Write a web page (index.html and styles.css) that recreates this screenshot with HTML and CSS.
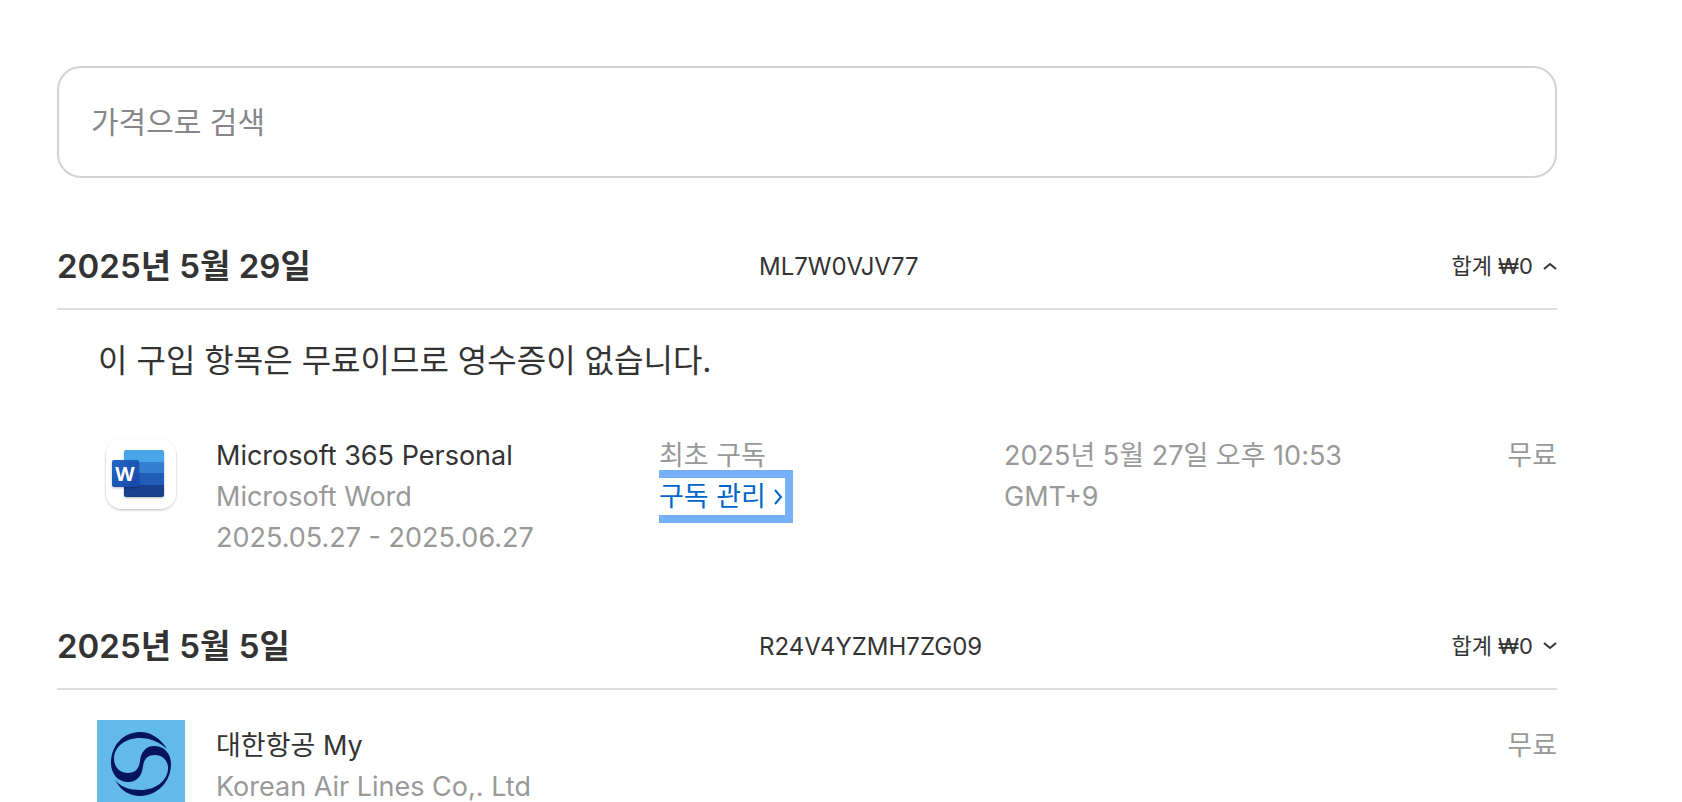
FILE: index.html
```html
<!DOCTYPE html>
<html lang="ko">
<head>
    <meta charset="utf-8">
    <meta name="viewport" content="width=device-width, initial-scale=1">
    <title>구입 내역</title>
    <link rel="stylesheet" href="styles.css">
</head>
<body>
    <main class="purchases">
        <input class="search" type="search" placeholder="가격으로 검색" aria-label="가격으로 검색">

        <section class="invoice">
            <header class="invoice-header">
                <h2 class="invoice-date">2025년 5월 29일</h2>
                <span class="invoice-id">ML7W0VJV77</span>
                <button class="invoice-total" type="button" aria-expanded="true">
                    합계 ₩0
                    <svg class="chevron" viewBox="0 0 14 8" aria-hidden="true"><path d="M1 7l6-5 6 5"/></svg>
                </button>
            </header>
            <p class="notice">이 구입 항목은 무료이므로 영수증이 없습니다.</p>

            <div class="item">
                <svg class="item-icon" viewBox="0 0 88 88" aria-hidden="true">
                    <defs>
                        <linearGradient id="word-tile" x1="0" y1="0" x2="1" y2="1">
                            <stop offset="0" stop-color="#2368c4"/>
                            <stop offset="1" stop-color="#1747a6"/>
                        </linearGradient>
                        <filter id="soft" x="-20%" y="-20%" width="140%" height="140%">
                            <feDropShadow dx="0" dy="1" stdDeviation="1" flood-color="#000" flood-opacity=".28"/>
                        </filter>
                        <clipPath id="word-page"><rect x="27" y="20" width="40" height="47" rx="2"/></clipPath>
                    </defs>
                    <rect x="9" y="9" width="70" height="70" rx="16" fill="#fff" filter="url(#soft)"/>
                    <g filter="url(#soft)">
                        <g clip-path="url(#word-page)">
                            <path fill="#4aa5ea" d="M27 20h40v12H27z"/>
                            <path fill="#357fd0" d="M27 32h40v11H27z"/>
                            <path fill="#235cba" d="M27 43h40v12H27z"/>
                            <path fill="#193f8e" d="M27 55h40v12H27z"/>
                        </g>
                    </g>
                    <rect x="15" y="30" width="27" height="27" rx="2" fill="url(#word-tile)" filter="url(#soft)"/>
                    <text class="word-letter" x="28" y="51" text-anchor="middle">W</text>
                </svg>
                <div class="item-info">
                    <div class="item-name">Microsoft 365 Personal</div>
                    <div>Microsoft Word</div>
                    <div>2025.05.27 - 2025.06.27</div>
                </div>
                <div class="item-plan">
                    <div>최초 구독</div>
                    <a class="manage" href="#">구독 관리<svg class="manage-arrow" viewBox="0 0 9 16" aria-hidden="true"><path d="M1 1l6 7-6 7"/></svg></a>
                </div>
                <div class="item-date">2025년 5월 27일 오후 10:53 GMT+9</div>
                <div class="item-price">무료</div>
            </div>
        </section>

        <section class="invoice">
            <header class="invoice-header">
                <h2 class="invoice-date">2025년 5월 5일</h2>
                <span class="invoice-id">R24V4YZMH7ZG09</span>
                <button class="invoice-total" type="button" aria-expanded="false">
                    합계 ₩0
                    <svg class="chevron" viewBox="0 0 14 8" aria-hidden="true"><path d="M1 1l6 5 6-5"/></svg>
                </button>
            </header>

            <div class="item item-first">
                <svg class="item-icon" viewBox="0 0 88 88" aria-hidden="true">
                    <path fill="#61bae7" d="M0 0h88v88H0z"/>
                    <g fill="#06145f">
                        <path d="M70 29C63 18 54 12 43 12C26 12 14 26 14 43C14 54 21 62 31 62C40 62 45 56 46 46C47 39 51 35 58 35C66 35 71 41 71 48C71 61 58 70 44 70C32 70 24 67 18 60C24 71 33 76 43 76C60 76 74 62 74 44C74 33 67 26 57 26C49 26 44 32 43 41C42 49 38 53 31 53C23 53 17 47 17 39C17 27 28 18 43 18C54 18 62 22 70 29z"/>
                    </g>
                </svg>
                <div class="item-info">
                    <div class="item-name">대한항공 My</div>
                    <div>Korean Air Lines Co,. Ltd</div>
                </div>
                <div class="item-price">무료</div>
            </div>
        </section>
    </main>
</body>
</html>
```
FILE: styles.css
```css
* {
    box-sizing: border-box;
}

body {
    margin: 0;
    background-color: #fff;
    color: #333;
    font-family: Inter, "Noto Sans CJK KR", sans-serif;
    font-size: 27px;
    line-height: 41px;
}

.purchases {
    padding: 66px 125px 40px 57px;
}

.search {
    display: block;
    width: 100%;
    height: 112px;
    padding: 0 32px;
    border: 2px solid #d2d2d7;
    border-radius: 24px;
    background-color: #fff;
    color: #333;
    font-family: inherit;
    font-size: 30px;
    appearance: none;
}

.search::placeholder {
    color: #86868b;
}

.invoice {
    padding-top: 46px;
}

.invoice-header {
    display: grid;
    grid-template-columns: 702fr 400fr 398fr;
    align-items: center;
    height: 86px;
    border-bottom: 2px solid #ddd;
}

.invoice-date {
    margin: 0;
    font-size: 33px;
    font-weight: 600;
}

.invoice-id {
    font-size: 24px;
}

.invoice-total {
    justify-self: end;
    display: flex;
    align-items: center;
    gap: 10px;
    padding: 0;
    border: none;
    background: none;
    color: inherit;
    font-family: inherit;
    font-size: 22px;
    line-height: inherit;
    cursor: pointer;
}

.chevron {
    width: 14px;
    height: 8px;
    fill: none;
    stroke: currentColor;
    stroke-width: 2;
}

.notice {
    margin: 30px 0 49px;
    padding-left: 41px;
    font-size: 32px;
}

.item {
    display: grid;
    grid-template-columns: 119px 443fr 345fr 400fr 153fr;
    padding-left: 40px;
    color: #999;
}

.item-first {
    margin-top: 30px;
}

.item-icon {
    width: 88px;
    height: 88px;
}

.item-info,
.item-plan,
.item-date,
.item-price {
    padding-top: 5px;
}

.item-name {
    color: #333;
}

.item-plan {
    overflow-x: clip;
}

.item-price {
    grid-column: 5;
    text-align: right;
}

.manage {
    display: flex;
    align-items: center;
    gap: 8px;
    width: fit-content;
    height: 37px;
    margin-top: 2px;
    padding-right: 2px;
    outline: 8px solid #76b0f8;
    color: #06c;
    text-decoration: none;
}

.manage-arrow {
    width: 9px;
    height: 16px;
    fill: none;
    stroke: currentColor;
    stroke-width: 2;
}

.word-letter {
    fill: #fff;
    font-family: "Open Sans", sans-serif;
    font-size: 20px;
    font-weight: 700;
}
```
